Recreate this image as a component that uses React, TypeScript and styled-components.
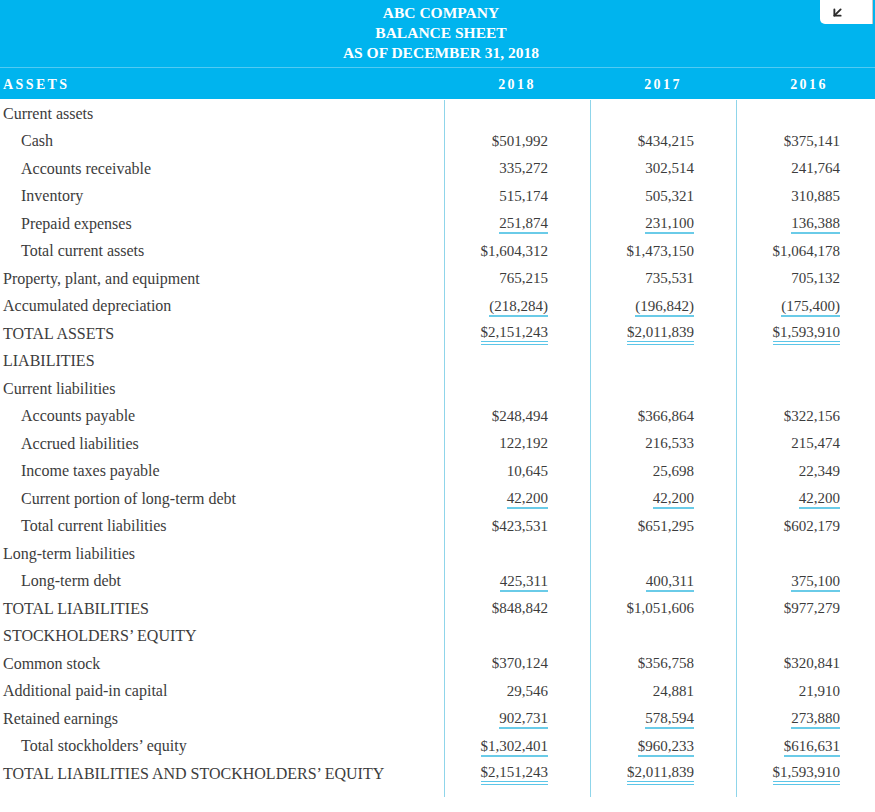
import React from "react"
import styled, { createGlobalStyle } from "styled-components"
import { ArrowDownLeft } from "lucide-react"

type Line = "none" | "single" | "double"

interface Row {
  label: string
  indent?: boolean
  values?: [string, string, string]
  line?: Line
}

const rows: Row[] = [
  { label: "Current assets" },
  { label: "Cash", indent: true, values: ["$501,992", "$434,215", "$375,141"] },
  { label: "Accounts receivable", indent: true, values: ["335,272", "302,514", "241,764"] },
  { label: "Inventory", indent: true, values: ["515,174", "505,321", "310,885"] },
  { label: "Prepaid expenses", indent: true, values: ["251,874", "231,100", "136,388"], line: "single" },
  { label: "Total current assets", indent: true, values: ["$1,604,312", "$1,473,150", "$1,064,178"] },
  { label: "Property, plant, and equipment", values: ["765,215", "735,531", "705,132"] },
  { label: "Accumulated depreciation", values: ["(218,284)", "(196,842)", "(175,400)"], line: "single" },
  { label: "TOTAL ASSETS", values: ["$2,151,243", "$2,011,839", "$1,593,910"], line: "double" },
  { label: "LIABILITIES" },
  { label: "Current liabilities" },
  { label: "Accounts payable", indent: true, values: ["$248,494", "$366,864", "$322,156"] },
  { label: "Accrued liabilities", indent: true, values: ["122,192", "216,533", "215,474"] },
  { label: "Income taxes payable", indent: true, values: ["10,645", "25,698", "22,349"] },
  { label: "Current portion of long-term debt", indent: true, values: ["42,200", "42,200", "42,200"], line: "single" },
  { label: "Total current liabilities", indent: true, values: ["$423,531", "$651,295", "$602,179"] },
  { label: "Long-term liabilities" },
  { label: "Long-term debt", indent: true, values: ["425,311", "400,311", "375,100"], line: "single" },
  { label: "TOTAL LIABILITIES", values: ["$848,842", "$1,051,606", "$977,279"] },
  { label: "STOCKHOLDERS’ EQUITY" },
  { label: "Common stock", values: ["$370,124", "$356,758", "$320,841"] },
  { label: "Additional paid-in capital", values: ["29,546", "24,881", "21,910"] },
  { label: "Retained earnings", values: ["902,731", "578,594", "273,880"], line: "single" },
  { label: "Total stockholders’ equity", indent: true, values: ["$1,302,401", "$960,233", "$616,631"], line: "single" },
  { label: "TOTAL LIABILITIES AND STOCKHOLDERS’ EQUITY", values: ["$2,151,243", "$2,011,839", "$1,593,910"], line: "double" },
]

const years = ["2018", "2017", "2016"]

export default function App() {
  return (
    <>
      <GlobalStyle />
      <Sheet>
        <Banner>
          <Title>
            <div>ABC COMPANY</div>
            <div>BALANCE SHEET</div>
            <div>AS OF DECEMBER 31, 2018</div>
          </Title>
          <HeadRow>
            <HeadCell>ASSETS</HeadCell>
            {years.map((y) => (
              <HeadCell key={y} $center>
                {y}
              </HeadCell>
            ))}
          </HeadRow>
        </Banner>
        <Body>
          {rows.map((r) => (
            <React.Fragment key={r.label}>
              <Label $indent={r.indent}>{r.label}</Label>
              {[0, 1, 2].map((i) => (
                <Amount key={i}>
                  {r.values && <Figure $line={r.line ?? "none"}>{r.values[i]}</Figure>}
                </Amount>
              ))}
            </React.Fragment>
          ))}
          <Spacer />
          <Spacer $rule />
          <Spacer $rule />
          <Spacer $rule />
        </Body>
      </Sheet>
      <Collapse>
        <ArrowDownLeft size={15} strokeWidth={3} color="#2b2b2b" />
      </Collapse>
    </>
  )
}

const GlobalStyle = createGlobalStyle`
  html, body {
    margin: 0;
    padding: 0;
    background: #ffffff;
    overflow-x: hidden;
  }
  body {
    font-family: "Liberation Serif", "DejaVu Serif", serif;
    color: #3c3c3c;
  }
`

const Sheet = styled.div`
  width: 882px;
  border-bottom: 2px solid #7fd0ea;
`

const Banner = styled.header`
  background: #00b4ee;
  color: #ffffff;
`

const Title = styled.div`
  padding: 3px 0 4px;
  border-bottom: 1px solid #52caf2;
  text-align: center;
  font-size: 15.5px;
  font-weight: bold;
  line-height: 20px;
`

const HeadRow = styled.div`
  display: grid;
  grid-template-columns: 444px 146px 146px 146px;
  height: 31px;
  align-items: center;
`

const HeadCell = styled.div<{ $center?: boolean }>`
  padding-left: ${(p) => (p.$center ? "0" : "3px")};
  text-align: ${(p) => (p.$center ? "center" : "left")};
  font-size: 14px;
  font-weight: bold;
  letter-spacing: 2.4px;
  padding-top: 2px;
`

const Body = styled.div`
  display: grid;
  grid-template-columns: 444px 146px 146px 146px;
  grid-auto-rows: 27.5px;
  padding-top: 1px;
`

const Label = styled.div<{ $indent?: boolean }>`
  display: flex;
  align-items: center;
  padding-left: ${(p) => (p.$indent ? "21px" : "3px")};
  font-size: 16px;
  white-space: nowrap;
`

const Amount = styled.div`
  display: flex;
  align-items: center;
  justify-content: flex-end;
  padding-right: 42px;
  border-left: 1px solid #8fd5ea;
  font-size: 15px;
`

const Figure = styled.span<{ $line: Line }>`
  display: inline-block;
  line-height: 17px;
  border-bottom: ${(p) =>
    p.$line === "single"
      ? "2px solid #6acbe8"
      : p.$line === "double"
        ? "4px double #5cc6e8"
        : "2px solid transparent"};
  margin-top: 2px;
`

const Spacer = styled.div<{ $rule?: boolean }>`
  height: 9px;
  align-self: start;
  border-left: ${(p) => (p.$rule ? "1px solid #8fd5ea" : "none")};
`

const Collapse = styled.button`
  position: absolute;
  top: 0;
  right: 2px;
  width: 53px;
  height: 24px;
  display: flex;
  align-items: center;
  padding: 0 0 0 10px;
  background: #ffffff;
  border: none;
  border-right: 1px solid #c8c8c8;
  border-radius: 0 0 0 5px;
`
